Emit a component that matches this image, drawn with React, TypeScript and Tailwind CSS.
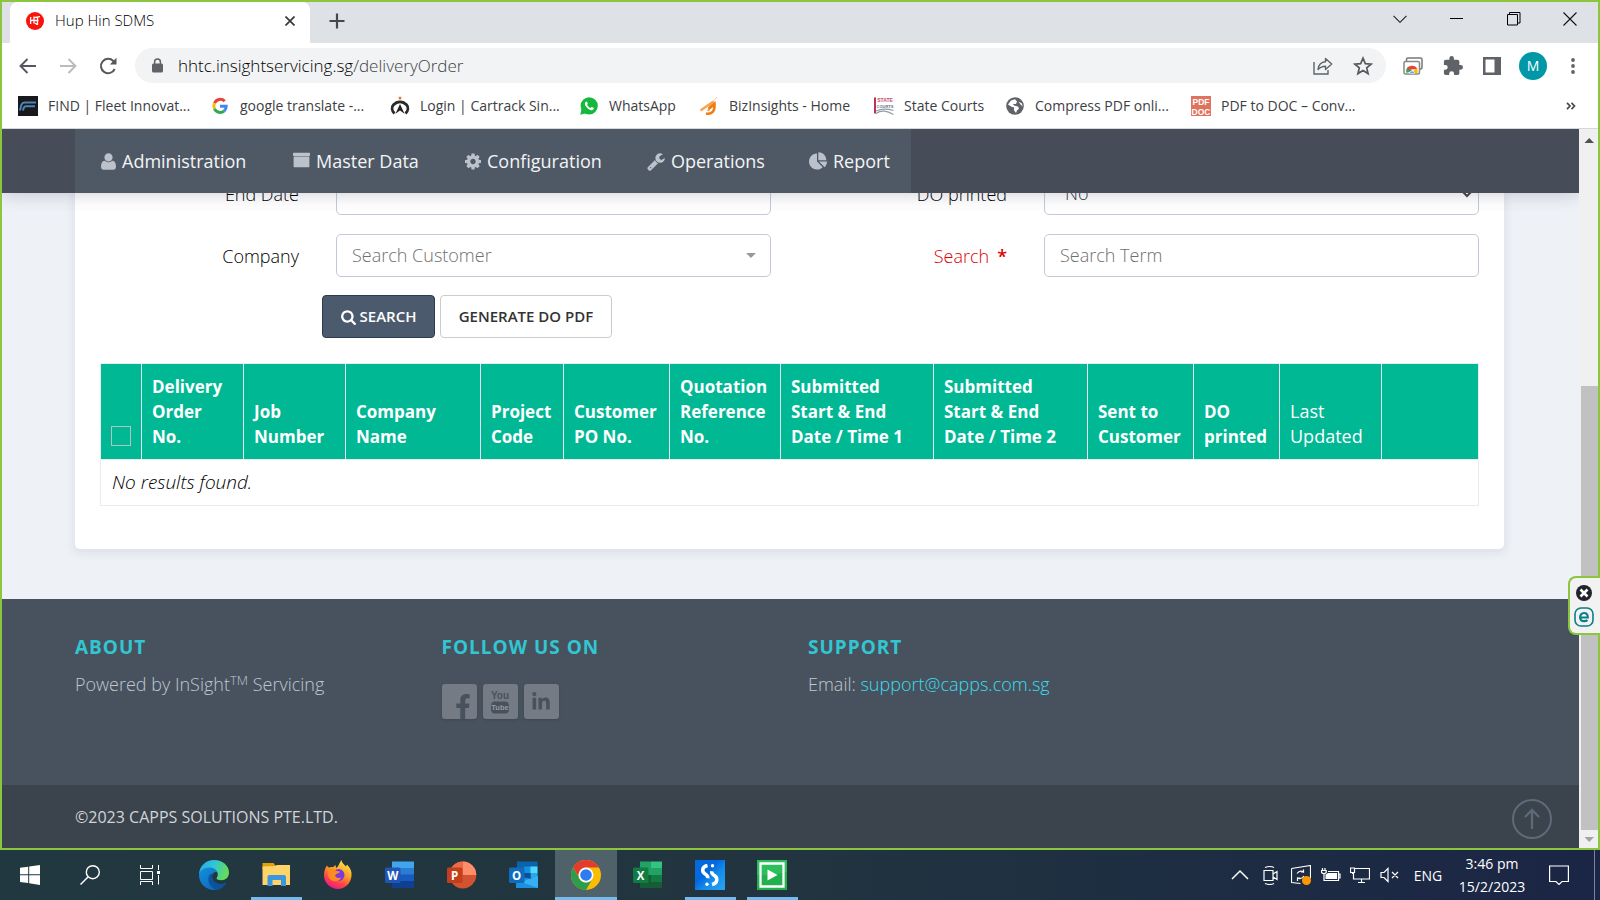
import type { ReactNode } from "react";
import { FaFacebookF, FaLinkedinIn } from "react-icons/fa";

const UI = "font-['Open_Sans','Noto_Sans',sans-serif]";

/* ---------- glyphs of the navigation bar ---------- */

function Glyph({ d, w, className }: { d: string; w: number; className: string }) {
  return (
    <svg viewBox={`0 -1536 ${w} 1792`} className={className} fill="currentColor" aria-hidden="true">
      <path transform="scale(1,-1)" d={d} />
    </svg>
  );
}

const USER =
  "M1408 131q0 -120 -73 -189.5t-194 -69.5h-874q-121 0 -194 69.5t-73 189.5q0 53 3.5 103.5t14 109t26.5 108.5t43 97.5t62 81t85.5 53.5t111.5 20q9 0 42 -21.5t74.5 -48t108 -48t133.5 -21.5t133.5 21.5t108 48t74.5 48t42 21.5q61 0 111.5 -20t85.5 -53.5t62 -81t43 -97.5t26.5 -108.5t14 -109t3.5 -103.5zM1088 1024q0 -159 -112.5 -271.5t-271.5 -112.5t-271.5 112.5t-112.5 271.5t112.5 271.5t271.5 112.5t271.5 -112.5t112.5 -271.5z";
const ARCHIVE =
  "M1060 832q0 -26 -19 -45t-45 -19h-256q-26 0 -45 19t-19 45t19 45t45 19h256q26 0 45 -19t19 -45zM1672 1024v-960q0 -26 -19 -45t-45 -19h-1480q-26 0 -45 19t-19 45v960q0 26 19 45t45 19h1480q26 0 45 -19t19 -45zM1736 1408v-192q0 -26 -19 -45t-45 -19h-1608q-26 0 -45 19t-19 45v192q0 26 19 45t45 19h1608q26 0 45 -19t19 -45z";
const COG =
  "M1024 640q0 106 -75 181t-181 75t-181 -75t-75 -181t75 -181t181 -75t181 75t75 181zM1536 749v-222q0 -12 -8 -23t-20 -13l-185 -28q-19 -54 -39 -91q35 -50 107 -138q10 -12 10 -25t-9 -23q-27 -37 -99 -108t-94 -71q-12 0 -26 9l-138 108q-44 -23 -91 -38q-16 -136 -29 -186q-7 -28 -36 -28h-222q-14 0 -24.5 8.5t-11.5 21.5l-28 184q-49 16 -90 37l-141 -107q-10 -9 -25 -9q-14 0 -25 11q-126 114 -165 168q-7 10 -7 23q0 12 8 23q15 21 51 66.5t54 70.5q-27 50 -41 99l-183 27q-13 2 -21 12.5t-8 23.5v222q0 12 8 23t19 13l186 28q14 46 39 92q-40 57 -107 138q-10 12 -10 24q0 10 9 23q26 36 98.5 107.5t94.5 71.5q13 0 26 -10l138 -107q44 23 91 38q16 136 29 186q7 28 36 28h222q14 0 24.5 -8.5t11.5 -21.5l28 -184q49 -16 90 -37l142 107q9 9 24 9q13 0 25 -10q129 -119 165 -170q7 -8 7 -22q0 -12 -8 -23q-15 -21 -51 -66.5t-54 -70.5q26 -50 41 -98l183 -28q13 -2 21 -12.5t8 -23.5z";
const WRENCH =
  "M384 64q0 26 -19 45t-45 19t-45 -19t-19 -45t19 -45t45 -19t45 19t19 45zM1028 484l-682 -682q-37 -37 -90 -37q-52 0 -91 37l-106 108q-38 36 -38 90q0 53 38 91l681 681q39 -98 114.5 -173.5t173.5 -114.5zM1662 919q0 -39 -23 -106q-47 -134 -164.5 -217.5t-258.5 -83.5q-185 0 -316.5 131.5t-131.5 316.5t131.5 316.5t316.5 131.5q58 0 121.5 -16.5t107.5 -46.5q16 -11 16 -28t-16 -28l-293 -169v-224l193 -107q5 3 79 48.5t135.5 81t70.5 35.5q15 0 23.5 -10t8.5 -25z";
const PIE =
  "M768 646l546 -546q-106 -108 -247.5 -168t-298.5 -60q-209 0 -385.5 103t-279.5 279.5t-103 385.5t103 385.5t279.5 279.5t385.5 103v-762zM955 640h773q0 -157 -60 -298.5t-168 -247.5zM1664 768h-768v768q209 0 385.5 -103t279.5 -279.5t103 -385.5z";
const SEARCH =
  "M1152 704q0 185 -131.5 316.5t-316.5 131.5t-316.5 -131.5t-131.5 -316.5t131.5 -316.5t316.5 -131.5t316.5 131.5t131.5 316.5zM1664 -128q0 -52 -38 -90t-90 -38q-54 0 -90 38l-343 342q-179 -124 -399 -124q-143 0 -273.5 55.5t-225 150t-150 225t-55.5 273.5t55.5 273.5t150 225t225 150t273.5 55.5t273.5 -55.5t225 -150t150 -225t55.5 -273.5q0 -220 -124 -399l343 -343q37 -37 37 -90z";

/* ---------- browser chrome ---------- */

function TabStrip() {
  return (
    <div className="flex h-[41px] shrink-0 bg-[#dee1e6] pl-2">
      <div className="flex h-full w-[300px] items-center rounded-t-lg bg-white pb-1 pl-4 pr-[11px]">
        <svg viewBox="0 0 18 18" className="size-[18px]" aria-hidden="true">
          <circle cx="9" cy="9" r="9" fill="#f8130c" />
          <path d="M4.600 5v7M8 4.500v7M4.600 8.800 8 8M8 5.600l6-1M11.500 5.500v7.500M8.500 8.500h4M9 11l2 1.500" stroke="#fff" strokeWidth="1.300" fill="none" />
        </svg>
        <span className="ml-[11px] flex-1 text-[15px] font-light text-black">Hup Hin SDMS</span>
        <button aria-label="Close tab" className="flex size-[18px] items-center justify-center">
          <svg viewBox="0 0 10 10" className="size-[10px]" stroke="#35383c" strokeWidth="1.700">
            <path d="m0.500.5 9 9M9.500.5l-9 9" />
          </svg>
        </button>
      </div>
      <button aria-label="New tab" className="ml-[18px] flex w-[18px] items-center justify-center pb-1">
        <svg viewBox="0 0 16 16" className="size-4" stroke="#45484c" strokeWidth="2.200">
          <path d="M8 .5v15M.5 8h15" />
        </svg>
      </button>
      <div className="ml-auto flex pb-2">
        <button aria-label="Search tabs" className="flex w-[57px] items-center justify-center">
          <svg viewBox="0 0 14 8" className="h-2 w-[14px]" fill="none" stroke="#222" strokeWidth="1.100"><path d="m.5.800 6.500 6.500L13.500.8" /></svg>
        </button>
        <button aria-label="Minimise" className="flex w-[57px] items-center justify-center">
          <span className="h-px w-[13px] bg-black" />
        </button>
        <button aria-label="Restore" className="flex w-[57px] items-center justify-center">
          <svg viewBox="0 0 14 14" className="size-[14px]" fill="none" stroke="#000"><path d="M.5 2.500h10v10.500H.5zM2.500 2.500V.5h10.500v10.500h-2.500" /></svg>
        </button>
        <button aria-label="Close" className="flex w-[56px] items-center justify-center">
          <svg viewBox="0 0 14 14" className="size-[14px]" fill="none" stroke="#111" strokeWidth="1.100"><path d="m.5.5 13 13M13.500.5l-13 13" /></svg>
        </button>
      </div>
    </div>
  );
}

function Toolbar() {
  return (
    <div className="flex h-[45px] shrink-0 items-center bg-white pl-[17px] pr-5 text-[#5f6368]">
      <button aria-label="Back" className="w-10">
        <svg viewBox="0 0 18 16" className="h-4 w-[18px]" fill="none" stroke="#55595e" strokeWidth="1.900"><path d="M17 8H1.500M8.500 1 1.500 8l7 7" /></svg>
      </button>
      <button aria-label="Forward" className="w-10">
        <svg viewBox="0 0 18 16" className="h-4 w-[18px]" fill="none" stroke="#b9bbbe" strokeWidth="1.900"><path d="M1 8h15.500M9.500 1l7 7-7 7" /></svg>
      </button>
      <button aria-label="Reload" className="w-9">
        <svg viewBox="0 0 18 18" className="size-[18px]" fill="none" stroke="#55595e" strokeWidth="2">
          <path d="M15.700 12A7.200 7.200 0 1 1 14.300 4L16 6" /><path d="M17.500.800v6.700h-6.700z" fill="#55595e" stroke="none" />
        </svg>
      </button>
      <div className="flex h-[35px] flex-1 items-center rounded-full bg-[#f1f3f4] pl-4 pr-[13px]">
        <svg viewBox="0 0 13 16" className="h-4 w-[13px]" aria-hidden="true">
          <rect x="1" y="5.500" width="11" height="9" rx="1.500" fill="#5f6368" />
          <path d="M3.600 6V3.900a2.900 2.900 0 0 1 5.800 0V6" fill="none" stroke="#5f6368" strokeWidth="1.500" />
        </svg>
        <span className="ml-[14px] flex-1 text-[17px] font-light text-[#3f4246]">
          <span className="text-black">hhtc.insightservicing.sg</span>/deliveryOrder
        </span>
        <button aria-label="Share" className="mr-5">
          <svg viewBox="0 0 20 18" className="h-[18px] w-5" fill="none" stroke="#5f6368" strokeWidth="1.400">
            <path d="M1 5v12h14v-4" /><path d="M5 12.500C5.500 7.500 8.500 5 12.500 4.700V1.500L18.700 7l-6.200 5.500V9.200C9 9.200 7 10.200 5 12.500z" strokeLinejoin="round" />
          </svg>
        </button>
        <button aria-label="Bookmark this page">
          <svg viewBox="0 0 20 20" className="size-5" fill="none" stroke="#55595e" strokeWidth="1.700">
            <path d="m10 2.200 2.300 5.400 5.900.5-4.500 3.800 1.400 5.700-5.100-3.100-5.100 3.100 1.400-5.700L1.800 8.100l5.900-.5z" />
          </svg>
        </button>
      </div>
      <div className="ml-[17px] flex items-center">
        <button aria-label="Screen cast" className="w-10">
          <svg viewBox="0 0 20 18" className="h-[18px] w-5">
            <rect x="3.500" y="1" width="15.500" height="11" rx="1.500" fill="none" stroke="#777" strokeWidth="1.500" />
            <rect x="1" y="4.500" width="15.500" height="12.500" rx="1.500" fill="#fff" stroke="#888" strokeWidth="1.500" />
            <path d="M3.500 16a5.800 5.800 0 0 1 2-6.500L9 14z" fill="#34a853" />
            <path d="M3.800 12.500A5.700 5.700 0 0 1 14.300 12l-5.500.5z" fill="#ea4335" />
            <path d="M14.300 12a6 6 0 0 1 .2 4.200H9l3-4z" fill="#fbbc04" />
            <path d="M6.400 16.200a2.700 2.700 0 0 1 5.300 0z" fill="#4285f4" stroke="#fff" strokeWidth=".7" />
          </svg>
        </button>
        <button aria-label="Extensions" className="w-10">
          <svg viewBox="1 1 22 22" className="size-5" fill="#5f6368">
            <path d="M20.500 11H19V7a2 2 0 0 0-2-2h-4V3.500a2.500 2.500 0 0 0-5 0V5H4a2 2 0 0 0-2 2v3.800h1.500a2.700 2.700 0 0 1 0 5.400H2V20a2 2 0 0 0 2 2h3.800v-1.500a2.700 2.700 0 0 1 5.400 0V22H17a2 2 0 0 0 2-2v-4h1.500a2.500 2.500 0 0 0 0-5z" />
          </svg>
        </button>
        <button aria-label="Side panel" className="w-9">
          <svg viewBox="0 0 18 18" className="size-[18px]"><path d="M0 0h18v18H0zM2.500 2.500v13h9v-13z" fill="#5f6368" fillRule="evenodd" /></svg>
        </button>
        <button aria-label="Profile" className="size-7 rounded-full bg-[#0097a7] text-[14px] leading-7 text-white">M</button>
        <button aria-label="Menu" className="ml-5 flex w-[11px] justify-center">
          <svg viewBox="0 0 4 18" className="h-[18px] w-1" fill="#5f6368"><circle cx="2" cy="3" r="1.900" /><circle cx="2" cy="9" r="1.900" /><circle cx="2" cy="15" r="1.900" /></svg>
        </button>
      </div>
    </div>
  );
}

const bookmarks: { label: string; width: string; icon: ReactNode }[] = [
  {
    label: "FIND | Fleet Innovat...", width: "w-[192px]",
    icon: <><path fill="#17191c" d="M0 0h20v20H0z" /><path d="M2 14.500C3 9 3.500 6.500 7 6.500h11M5 14.500c.5-3 1-4.200 3-4.200h9" fill="none" stroke="#4f83b4" strokeWidth="2" /></>,
  },
  {
    label: "google translate -...", width: "w-[180px]",
    icon: <g fill="none" strokeWidth="3"><path d="M14.700 5.300A6.200 6.200 0 0 0 4.500 7.200" stroke="#ea4335" /><path d="M4.500 7.200a6.200 6.200 0 0 0 0 5.700" stroke="#fbbc05" /><path d="M4.500 12.900a6.200 6.200 0 0 0 9.800 1.900" stroke="#34a853" /><path d="M10 10.200h6.200c0 2-.7 3.500-1.900 4.600" stroke="#4285f4" /></g>,
  },
  {
    label: "Login | Cartrack Sin...", width: "w-[189px]",
    icon: <><circle cx="10" cy="2" r="1.500" fill="#e8734a" /><path d="M4.500 17.500C1.500 14.500 1.500 11 3.500 8.800c3.600-4 9.400-4 13 0 2 2.200 2 5.700-1 8.700" fill="none" stroke="#2a2a2a" strokeWidth="2.800" /><path d="m10 8 4.500 9.700L10 14.500l-4.500 3.200z" fill="#222" /></>,
  },
  {
    label: "WhatsApp", width: "w-[120px]",
    icon: (
      <>
        <circle cx="10.200" cy="9.800" r="8.600" fill="#16b83c" /><path d="m1.200 18.700 1.500-6 4.500 4.500z" fill="#16b83c" />
        <path d="M6.300 6.200c1-1.300 1.700-.9 2.400 1 .3.800-.8 1.300-.5 1.800.9 1.500 1.900 2.400 3.300 2.900.5.200 1-1.300 1.600-1 2.100 1 2.200 1.200 1.100 2.600-1.200 1.400-4 .4-5.900-1.500-2-2-3.100-4.400-2-5.800z" fill="#fff" />
      </>
    ),
  },
  {
    label: "BizInsights - Home", width: "w-[175px]",
    icon: <g fill="none"><path d="M1.500 14.500 14.500 5.500 9 15" stroke="#f7a24a" strokeWidth="2.200" /><path d="M7 17.500c6 1 9-2 8.500-9.500-2 2-4 3.500-6 4.500" stroke="#ef7d14" strokeWidth="2.600" /><path d="M14 5.500 18 1" stroke="#f9c9a0" /></g>,
  },
  {
    label: "State Courts", width: "w-[131px]",
    icon: (
      <g fontFamily="Liberation Sans">
        <path d="M1 1.500v16" stroke="#c2305a" strokeWidth="2" />
        <path d="M2 17.500c6-4 11-2.500 17.500 1M2 15c6-3 11-2.500 17.500-.5" stroke="#8ba0aa" strokeWidth="1.300" fill="none" />
        <text x="11" y="6" fontSize="5" fontWeight="700" fill="#c4506e" textAnchor="middle">STATE</text>
        <text x="11" y="12" fontSize="4" fontWeight="700" fill="#6a6f80" textAnchor="middle">COURTS</text>
      </g>
    ),
  },
  {
    label: "Compress PDF onli...", width: "w-[186px]",
    icon: <><circle cx="10" cy="10" r="8.800" fill="#5f6368" /><path d="M3 8.500 7 11l2 .2v3L11 17l1-2.500 2-2-1-2-4-1L8 8h3l1-2.500L10 3.300 6 4.500M13.500 5.500 17 7.500l.5 3-2-2z" fill="#fff" /></>,
  },
  {
    label: "PDF to DOC – Conv...", width: "w-[170px]",
    icon: (
      <g fontFamily="Liberation Sans">
        <path fill="#e0735e" d="M0 0h20v20H0z" />
        <text x="10" y="8.500" fontSize="8.500" fontWeight="700" fill="#fff" textAnchor="middle">PDF</text>
        <text x="10" y="18.500" fontSize="8.500" fontWeight="700" fill="#fff" textAnchor="middle">DOC</text>
      </g>
    ),
  },
];

function Bookmarks() {
  return (
    <div className="flex h-[41px] shrink-0 items-center border-b border-[#d5d7da] bg-white pb-[5px] pl-4 pr-[22px]">
      {bookmarks.map((b) => (
        <a key={b.label} href="#" className={`flex shrink-0 items-center gap-[10px] whitespace-nowrap text-[14px] text-[#3c4043] ${b.width}`}>
          <svg viewBox="0 0 20 20" className="size-5 shrink-0" aria-hidden="true">{b.icon}</svg>
          {b.label}
        </a>
      ))}
      <button aria-label="More bookmarks" className="ml-auto">
        <svg viewBox="0 0 10 8" className="h-2 w-[10px]" fill="none" stroke="#45484c" strokeWidth="1.700"><path d="m1 .800 3 3.200-3 3.200M5.500.8l3 3.200-3 3.200" /></svg>
      </button>
    </div>
  );
}

/* ---------- page ---------- */

const menu = [
  { label: "Administration", d: USER, w: 1408, width: "w-[192px]", icon: "h-[19px] w-[15px]" },
  { label: "Master Data", d: ARCHIVE, w: 1736, width: "w-[172px]", icon: "h-[18px] w-[17px]" },
  { label: "Configuration", d: COG, w: 1536, width: "w-[182px]", icon: "h-[19px] w-4" },
  { label: "Operations", d: WRENCH, w: 1664, width: "w-[162px]", icon: "h-[19px] w-[18px]" },
  { label: "Report", d: PIE, w: 1728, width: "w-[102px]", icon: "h-[19px] w-[18px]" },
];

function NavBar() {
  return (
    <nav className="relative z-10 flex h-16 shrink-0 bg-[#464c58] pl-[73px] pr-[75px] shadow-[0_2px_16px_rgba(60,60,90,0.22)]">
      <ul className="flex bg-[#4e5965] pl-[26px]">
        {menu.map((m) => (
          <li key={m.label} className={`flex ${m.width}`}>
            <a href="#" className="flex items-center gap-[6px] whitespace-nowrap text-[18px] text-[#f3f4f6]">
              <Glyph d={m.d} w={m.w} className={`${m.icon} shrink-0 text-[#bcc2cb]`} />
              {m.label}
            </a>
          </li>
        ))}
      </ul>
    </nav>
  );
}

const field = "h-[43px] w-full rounded-[5px] border border-[#c2cad8] bg-white text-[18px] font-light placeholder:text-[#6f6f6f]";

function Field({ id, label, required, children }: { id: string; label: string; required?: boolean; children: ReactNode }) {
  return (
    <div className="flex items-center gap-[37px]">
      <label htmlFor={id} className={`w-[199px] shrink-0 pt-[2px] text-right text-[18px] font-light ${required ? "text-[#dd0000]" : "text-black"}`}>
        {label}
        {required && <span className="ml-2 font-semibold">*</span>}
      </label>
      <div className="relative flex-1">{children}</div>
    </div>
  );
}

const columns = [
  { lines: ["Delivery", "Order", "No."], width: "w-[102px]" },
  { lines: ["Job", "Number"], width: "w-[102px]" },
  { lines: ["Company", "Name"], width: "w-[135px]" },
  { lines: ["Project", "Code"], width: "w-[83px]" },
  { lines: ["Customer", "PO No."], width: "w-[106px]" },
  { lines: ["Quotation", "Reference", "No."], width: "w-[111px]" },
  { lines: ["Submitted", "Start & End", "Date / Time 1"], width: "w-[153px]" },
  { lines: ["Submitted", "Start & End", "Date / Time 2"], width: "w-[154px]" },
  { lines: ["Sent to", "Customer"], width: "w-[106px]" },
  { lines: ["DO", "printed"], width: "w-[86px]" },
  { lines: ["Last", "Updated"], width: "w-[102px]", light: true },
];

function Orders() {
  const cell = "border border-[#e7ecf1] pl-[10px] align-bottom text-left";
  return (
    <table className="mt-[25px] w-full table-fixed border-collapse">
      <thead>
        <tr className="h-24 bg-[#00b894] text-white">
          <th className={`${cell} w-[41px] pb-[13px]`}>
            <input type="checkbox" aria-label="Select all orders" className="block size-5 appearance-none border border-[#b7c3c3]" />
          </th>
          {columns.map((c) => (
            <th key={c.lines.join(" ")} className={`${cell} whitespace-nowrap pb-[10px] leading-[25px] ${c.width} ${c.light ? "text-[18px] font-normal" : "text-[17px] font-bold"}`}>
              {c.lines.map((line) => (
                <span key={line} className="block">{line}</span>
              ))}
            </th>
          ))}
          <th aria-label="Actions" className={cell} />
        </tr>
      </thead>
      <tbody>
        <tr className="h-[46px]">
          <td colSpan={13} className="border border-[#e7ecf1] px-[11px] text-[19px] font-light italic leading-[25px] text-black">No results found.</td>
        </tr>
      </tbody>
    </table>
  );
}

function Content() {
  return (
    <main className="shrink-0 pb-[50px] pl-[73px] pr-[75px]">
      <div className="-mt-[21px] rounded-b-[5px] bg-white px-[25px] pb-[43px] shadow-[0_3px_8px_2px_rgba(57,70,78,0.08)]">
        <form className="grid grid-cols-2 gap-x-[37px] gap-y-[19px]">
          <Field id="end" label="End Date"><input id="end" type="text" className={`${field} px-[15px] text-[#333]`} /></Field>
          <Field id="printed" label="DO printed">
            <select id="printed" className={`${field} appearance-none px-5 text-[#333]`}><option>No</option><option>Yes</option></select>
            <svg viewBox="0 0 12 8" className="pointer-events-none absolute right-[6px] top-[18px] h-2 w-3" fill="none" stroke="#444" strokeWidth="2"><path d="m1.500 1.500 4.500 4.500 4.500-4.500" /></svg>
          </Field>
          <Field id="company" label="Company">
            <select id="company" className={`${field} appearance-none px-[15px] text-[#6f6f6f]`}><option>Search Customer</option></select>
            <svg viewBox="0 0 10 5" className="pointer-events-none absolute right-[15px] top-[19px] h-[5px] w-[10px]" fill="#999"><path d="M0 0h10L5 5z" /></svg>
          </Field>
          <Field id="term" label="Search" required><input id="term" type="text" placeholder="Search Term" className={`${field} px-[15px] pb-[2px] text-[#333]`} /></Field>
        </form>
        <div className="mt-[18px] flex gap-[5px] pl-[222px]">
          <button className="flex h-[43px] w-[113px] items-center justify-center gap-1 rounded-sm border border-[#2b3b4c] bg-[#4b5a6d] text-[15px] font-semibold text-white">
            <Glyph d={SEARCH} w={1664} className="h-4 w-[15px]" />
            SEARCH
          </button>
          <button className="h-[43px] w-[172px] rounded-sm border border-[#ccc] bg-white text-[15px] font-semibold text-[#333]">GENERATE DO PDF</button>
        </div>
        <Orders />
      </div>
    </main>
  );
}

const heading = "text-[19px] font-bold leading-[25px] tracking-[1px] text-[#32c5d2]";
const social = "flex size-[35px] justify-center overflow-hidden rounded-[3px] bg-[#747b84] text-[#48525e] shadow-sm";

function Footer() {
  return (
    <footer className="flex flex-1 flex-col">
      <div className="grid h-[186px] shrink-0 grid-cols-4 gap-[37px] bg-[#48525e] pl-[73px] pr-[75px] pt-9 text-[18px] font-light text-[#bfc7d2]">
        <section>
          <h2 className={heading}>ABOUT</h2>
          <p className="mt-3 leading-[25px]">Powered by InSight<sup className="text-[13px]">TM</sup> Servicing</p>
        </section>
        <section>
          <h2 className={heading}>FOLLOW US ON</h2>
          <div className="mt-6 flex gap-[6px]">
            <a href="#" aria-label="Facebook" className={`${social} items-end pl-2`}><FaFacebookF className="h-[25px] w-4" /></a>
            <a href="#" aria-label="YouTube" className={`${social} items-center`}>
              <svg viewBox="0 0 20 26" className="h-[26px] w-5" fill="currentColor" fontFamily="Liberation Sans" fontWeight="700">
                <text x="10" y="10" fontSize="10" textAnchor="middle">You</text>
                <rect x="1" y="12.500" width="18" height="12" rx="4" />
                <text x="10" y="21.300" fontSize="7.500" textAnchor="middle" fill="#949aa1">Tube</text>
              </svg>
            </a>
            <a href="#" aria-label="LinkedIn" className={`${social} items-center`}><FaLinkedinIn className="size-5" /></a>
          </div>
        </section>
        <section>
          <h2 className={heading}>SUPPORT</h2>
          <p className="mt-3 leading-[25px]">Email: <a href="mailto:support@capps.com.sg" className="text-[#38deed]">support@capps.com.sg</a></p>
        </section>
      </div>
      <div className="flex flex-1 items-center justify-between bg-[#3b434c] pl-[73px] pr-[27px] text-[16px] text-[#d0d5da]">
        <p>©2023 CAPPS SOLUTIONS PTE.LTD.</p>
        <button aria-label="Scroll to top" className="mt-1">
          <svg viewBox="0 0 40 40" className="size-10" fill="none" stroke="#5d6a79" strokeWidth="2"><circle cx="20" cy="20" r="19" /><path d="M20 30V11.500M13 18l7-7 7 7" strokeWidth="2.300" /></svg>
        </button>
      </div>
    </footer>
  );
}

function ScrollTrack() {
  return (
    <div className="flex w-[19px] shrink-0 flex-col items-center bg-[#f0f0f0] pl-px" aria-hidden="true">
      <svg viewBox="0 0 18 18" className="h-[23px] w-[18px] shrink-0" fill="#505050"><path d="M4.500 11.500h9.500L9.200 6.500z" /></svg>
      <div className="grow-[234]" />
      <div className="w-[17px] grow-[444] self-end bg-[#c1c1c1]" />
      <svg viewBox="0 0 18 18" className="h-[18px] w-[18px] shrink-0" fill="#a3a3a3"><path d="M4.500 7h9.500l-4.800 5z" /></svg>
    </div>
  );
}

/* ---------- task bar ---------- */

function Office({ letter, tile, shape }: { letter: string; tile: string; shape: ReactNode }) {
  return (
    <>
      {shape}
      <rect x="0" y="7.500" width="15.500" height="15.500" rx="1.500" fill={tile} />
      <text x="7.700" y="19.500" fontSize="11.500" fontWeight="700" fill="#fff" textAnchor="middle">{letter}</text>
    </>
  );
}

const apps: { name: string; state?: "open" | "active"; icon: ReactNode }[] = [
  {
    name: "Edge",
    icon: (
      <>
        <defs>
          <linearGradient id="e1" x1="0" y1="0" x2="1" y2=".3"><stop offset="0" stopColor="#2aa7ee" /><stop offset=".5" stopColor="#2fc3d8" /><stop offset="1" stopColor="#62dc5f" /></linearGradient>
          <linearGradient id="e2" x1="0" y1="0" x2="1" y2="1"><stop offset="0" stopColor="#1490df" /><stop offset="1" stopColor="#0a5fb0" /></linearGradient>
        </defs>
        <path d="M0 15C0 6 7 0 15 0c9 0 15 6 15 12.500 0 5-3.500 7.700-7.500 7.700-3 0-5-1-5-2 0-.7 1.300-1.500 1.300-3.700C18.800 11 15 8.500 11 8.500 5 8.500 1 11.500 0 15z" fill="url(#e1)" />
        <path d="M0 15C0 11 5 7.500 10.500 7.500c4 0 6.800 2 7.800 4.500-6-1-8 8 0 11.500 3 1.200 6 .7 9.200-1C25 27 20.500 30 15 30 7 30 0 23.500 0 15z" fill="url(#e2)" />
        <path d="M10 16c-2 6 1.500 11.500 7 13.800 4.500-.5 8.500-3.500 10.500-7.300-3.200 1.700-6.200 2.200-9.200 1C13 21 12.500 17 14 13.500c-2 0-3.300 1-4 2.500z" fill="#0d529c" />
      </>
    ),
  },
  {
    name: "File Explorer", state: "open",
    icon: <><path d="M1.500 3h11l2 2.500V9h-13z" fill="#e3a008" /><path d="M1.500 6.500 14 6l2-1h13v20h-27.500z" fill="#fed36a" /><path d="M6.500 26v-9q0-2 2-2h14.500q2 0 2 2v9h-5v-6h-8.500v6z" fill="#3a96dd" /></>,
  },
  {
    name: "Firefox",
    icon: (
      <>
        <defs><linearGradient id="f1" x1=".8" y1="0" x2=".3" y2="1"><stop offset="0" stopColor="#fff04a" /><stop offset=".45" stopColor="#ff9a24" /><stop offset=".75" stopColor="#ff3f4c" /><stop offset="1" stopColor="#e5178f" /></linearGradient></defs>
        <path d="M4 5.500c.5 1 1 1.600 1.700 2 1.300-.5 3-.7 4.300-.2L12.500 5l.5 3c2.500-1 3-4.500 5.500-8 .5 3.500 3 4.500 4.500 6.500l1-2c3.500 3.500 5 7 4.500 11.500C27.700 23.500 22 29 15 29S1 23.500 1 15.500C1 11.500 2 8 4 5.500z" fill="url(#f1)" />
        <circle cx="15.500" cy="15" r="6" fill="#7a3ae0" />
        <path d="M5 9c3-1 6 0 8.500 2 1.500 0 3 .2 3.500 1-1 1.500-4 1.500-5 3.500 1 2.500 3.500 3 6 2-1.500 4-6.500 5-10 2.500C5 18 4 13 5 9z" fill="#ff8a1e" />
      </>
    ),
  },
  {
    name: "Word",
    icon: <Office letter="W" tile="#1f56b8" shape={<><path fill="#41a5ee" d="M7 1.500h22v7H7z" /><path fill="#2b7cd3" d="M7 8h22v7H7z" /><path fill="#185abd" d="M7 14.500h22v7H7z" /><path fill="#103f91" d="M7 21h22v7H7z" /></>} />,
  },
  {
    name: "PowerPoint",
    icon: <Office letter="P" tile="#c43e1c" shape={<><circle cx="15.800" cy="15" r="13.500" fill="#d35230" /><path d="M15.800 1.500A13.500 13.500 0 0 1 29.300 15H15.800z" fill="#ff8f6b" /><path d="M15.800 1.500V15H2.300A13.500 13.500 0 0 1 15.800 1.500z" fill="#ed6c47" /></>} />,
  },
  {
    name: "Outlook",
    icon: <Office letter="O" tile="#0f6cbd" shape={<><path fill="#0a64ad" d="M8 1.500h20.500v16H8z" /><path fill="#1490df" d="M15 6.500h7v7h-7z" /><path fill="#50d9ff" d="M21.500 6.500h7v7h-7z" /><path fill="#28a8ea" d="M21.500 13h7v5h-7z" /><path fill="#0c4f94" d="M15 13h6.500v6H15z" /><path fill="#1b8fe0" d="M7 16l22 4v8H7z" /><path fill="#36b0f0" d="M29 16v12L12 22z" /></>} />,
  },
  {
    name: "Chrome", state: "active",
    icon: <><circle cx="15" cy="15" r="15" fill="#fbbc04" /><path d="M2 7.500A15 15 0 0 1 28 7.500H15a7.500 7.500 0 0 0-6.500 11.200z" fill="#e33b2e" /><path d="M2 7.500a15 15 0 0 0 13 22.500l6.500-11.200a7.500 7.500 0 0 1-13 0z" fill="#2c9e4b" /><circle cx="15" cy="15" r="7.500" fill="#fff" /><circle cx="15" cy="15" r="5.800" fill="#2f7cf0" /></>,
  },
  {
    name: "Excel",
    icon: <Office letter="X" tile="#107c41" shape={<><path fill="#21a366" d="M7 1.500h11v13.500H7z" /><path fill="#33c481" d="M18 1.500h11V8H18z" /><path fill="#21a366" d="M18 8h11v7H18z" /><path fill="#107c41" d="M18 15h11v7H18z" /><path fill="#185c37" d="M7 15h11v7h11v6H7z" /></>} />,
  },
  {
    name: "Splashtop", state: "open",
    icon: <><defs><linearGradient id="s1" x1="0" y1="0" x2="1" y2="1"><stop offset=".4" stopColor="#0468df" /><stop offset=".6" stopColor="#128bea" /><stop offset="1" stopColor="#2aa5f2" /></linearGradient></defs><path fill="url(#s1)" d="M0 0h30v30H0z" /><path d="M12.500 5.500C6.500 7 6.500 12 10.500 14.200c2 1.200 2.500 2.200 2.300 4M17 24.500c6-1.500 6-7 2-9.200-2-1.200-2.500-2.200-2.200-4" fill="none" stroke="#fff" strokeWidth="3.500" /><circle cx="17.500" cy="5.700" r="1.700" fill="#fff" /><circle cx="12" cy="24.300" r="1.700" fill="#fff" /></>,
  },
  {
    name: "Media player", state: "open",
    icon: <><path fill="#2cc05c" d="M0 0h30v30H0z" /><path d="M0 15h15l15-3v18H0z" fill="#22b04f" /><path d="M3.500 3.500h23v23h-23z" fill="none" stroke="#fff" strokeWidth="2.300" /><path d="M10.500 9.500v11l10-5.500z" fill="#fff" /></>,
  },
];

const tray: { name: string; width: string; icon: ReactNode }[] = [
  { name: "Show hidden icons", width: "w-[30px]", icon: <path d="m2 14 8-8 8 8" strokeWidth="1.500" /> },
  { name: "Meet now", width: "w-[30px]", icon: <path d="M4 5.500h9v10H4zM13 9l4-2.500v8L13 12M5 2.500q5-2 9 0M5 18.500q5 2 9 0" /> },
  { name: "Updates", width: "w-[31px]", icon: <><path d="M.5 3.500 19.500.5v13M.5 3.500v14l9 1M6 8.500q3-4 6.500-1.500V4.500M12.500 7H10M13 11q-2.500 4-6.500 2v3M6.500 13H9" /><circle cx="15.500" cy="15.500" r="4.500" fill="#ff9800" stroke="none" /></> },
  { name: "Battery", width: "w-[29px]", icon: <><path d="M3 9v6.500h14.500v-9H7M17.500 9h1.500v4h-1.500M1.500 3v2.500M4 3v2.500M.5 5.500h4.700v2q-2.300 2.300-4.700 0z" /><path d="M4.500 9.500 7 8h9v6H4.500z" fill="#fff" stroke="none" /></> },
  { name: "Network", width: "w-[30px]", icon: <path d="M5 3.500h14.500v10.500h-16V8M8 17.500h7M11.500 14v3.500M.5 3h4v4.500h-4zM2.500 7.500V9" /> },
  { name: "Volume", width: "w-[30px]", icon: <path d="M1 7.500h3L8 3.500v13l-4-4H1zM12 7l6 6M18 7l-6 6" /> },
];

function Taskbar() {
  const lead = "flex h-full w-[60px] items-center justify-center";
  return (
    <div className="flex h-[50px] shrink-0 items-center bg-linear-to-r from-[#223840] via-[#21343f] to-[#1b2545] text-white">
      <button aria-label="Start" className={lead}>
        <svg viewBox="0 0 20 20" className="size-5" fill="#fff"><path d="M0 2.800 8.200 1.700v7.600H0zM9.200 1.500 20 0v9.300H9.200zM0 10.300h8.200v7.800L0 17zM9.200 10.300H20V20L9.200 18.300z" /></svg>
      </button>
      <button aria-label="Search" className={lead}>
        <svg viewBox="0 0 20 20" className="size-5" fill="none" stroke="#fff" strokeWidth="1.400"><circle cx="12.800" cy="7.200" r="6.500" /><path d="M8 12 .5 19.500" /></svg>
      </button>
      <button aria-label="Task view" className={lead}>
        <svg viewBox="0 0 20 20" className="size-5" fill="none" stroke="#fff"><path d="M.5 0v3.500h12V0M.5 6.500h12v8H.5zM.5 20v-3.500h12V20M18.500 0v5M18.500 10v9.500" /><path d="M17 6h3v3h-3z" fill="#fff" stroke="none" /></svg>
      </button>
      <div className="ml-[3px] flex h-full">
        {apps.map((a) => (
          <button key={a.name} aria-label={a.name} className={`flex w-[62px] flex-col items-center pt-[10px] ${a.state === "active" ? "bg-[#4f6169]" : ""}`}>
            <svg viewBox="0 0 30 30" className="size-[30px]">{a.icon}</svg>
            {a.state && <span className={`mt-auto h-[3px] bg-[#76b9ed] ${a.state === "active" ? "w-full" : "w-[51px]"}`} />}
          </button>
        ))}
      </div>
      <div className="ml-auto flex h-full items-center">
        {tray.map((t) => (
          <button key={t.name} aria-label={t.name} className={`flex justify-center ${t.width}`}>
            <svg viewBox="0 0 20 20" className="size-5" fill="none" stroke="#fff" strokeWidth="1.200">{t.icon}</svg>
          </button>
        ))}
        <span className="w-[46px] text-center text-[14px]">ENG</span>
        <div className="w-[82px] text-center text-[14px] leading-[23px]">
          <p>3:46 pm</p>
          <p>15/2/2023</p>
        </div>
        <button aria-label="Notifications" className="flex w-[52px] justify-center">
          <svg viewBox="0 0 20 20" className="size-5" fill="none" stroke="#fff" strokeWidth="1.200"><path d="M.6 1h18.800v15.500h-6.400l-3 3-3-3H.6z" /></svg>
        </button>
        <div className="ml-[9px] mr-[5px] h-full w-px bg-[#7c8598]" />
      </div>
    </div>
  );
}

export default function App() {
  return (
    <div className={`flex h-screen flex-col overflow-hidden ${UI}`}>
      <div className="relative flex min-h-0 flex-1 flex-col border-2 border-[#8cc63f]">
        <TabStrip />
        <Toolbar />
        <Bookmarks />
        <div className="flex min-h-0 flex-1">
          <div className="flex min-w-0 flex-1 flex-col overflow-hidden bg-[#eef1f6]">
            <NavBar />
            <Content />
            <Footer />
          </div>
          <ScrollTrack />
        </div>
        <aside className="absolute -right-[2px] bottom-[213px] flex h-[59px] w-8 flex-col items-center justify-center gap-[6px] rounded-l-lg border-2 border-r-0 border-[#8cc63f] bg-[#f2f2f2] pr-[2px] pt-px">
          <button aria-label="Dismiss">
            <svg viewBox="0 0 16 16" className="size-4"><circle cx="8" cy="8" r="8" fill="#22242c" /><path d="m4.500 4.500 7 7M11.500 4.500l-7 7" stroke="#fff" strokeWidth="2.600" /></svg>
          </button>
          <button aria-label="Assistant">
            <svg viewBox="0 0 20 20" className="size-5" fill="none" stroke="#0a7f8c"><rect x="1" y="1" width="18" height="18" rx="6" strokeWidth="1.600" /><path d="M6.500 10.500h7.300c0-3-1.500-4.500-3.800-4.500s-3.900 1.700-3.900 4.200c0 2.600 1.700 4 4.100 4 1.400 0 2.400-.300 3.300-1" strokeWidth="2.200" /></svg>
          </button>
        </aside>
      </div>
      <Taskbar />
    </div>
  );
}
